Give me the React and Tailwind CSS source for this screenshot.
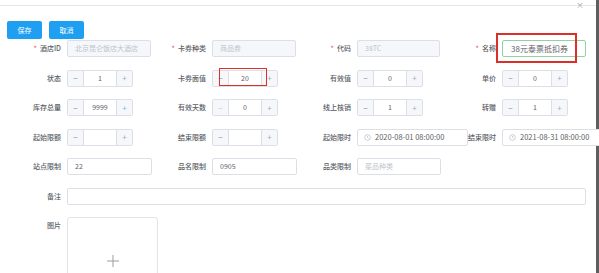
import React from 'react'

const font = { fontFamily: '"Noto Sans CJK SC", "Noto Sans", sans-serif' }

function Field({ label, required, children, className = '' }){
  return (
    <div className={'flex items-center h-[17px] ' + className}>
      <span className="w-[61px] shrink-0 text-right text-[7px] leading-none text-[#5a5e66] font-medium whitespace-nowrap">
        {required && <span className="text-[#f56c6c] mr-[3px]">*</span>}
        {label}
      </span>
      <div className="ml-[6px] h-full flex items-center">{children}</div>
    </div>
  )
}

function TextInput({ value, placeholder, disabled, green, big, w = 'w-[84px]' }){
  const border = green ? 'border-[#8fd4a0]' : 'border-[#dcdfe6]'
  const bg = disabled ? 'bg-[#f5f7fa]' : 'bg-white'
  const size = big ? 'text-[8px] pl-[8px]' : 'text-[7px] pl-[7px]'
  return (
    <div className={`${w} h-[17px] border ${border} ${bg} ${size} rounded-[2px] flex items-center overflow-hidden whitespace-nowrap leading-none`}>
      {value ? (
        <span className={disabled ? 'text-[#c0c4cc]' : 'text-[#606266]'}>{value}</span>
      ) : (
        <span className="text-[#c0c4cc]">{placeholder}</span>
      )}
    </div>
  )
}

function NumberInput({ value, minusOff, plusBlue }){
  return (
    <div className="w-[66px] h-[17px] border border-[#dcdfe6] rounded-[2px] flex text-[7px] leading-none overflow-hidden">
      <div className={`w-[16px] bg-[#f5f7fa] border-r border-[#dcdfe6] flex items-center justify-center text-[8px] ${minusOff ? 'text-[#c8cbd2]' : 'text-[#8a8e96]'}`}>−</div>
      <div className="flex-1 flex items-center justify-center text-[#606266]">{value}</div>
      <div className={`w-[16px] bg-[#f5f7fa] border-l border-[#dcdfe6] flex items-center justify-center text-[8px] ${plusBlue ? 'text-[#7fb9ef]' : 'text-[#a8abb2]'}`}>+</div>
    </div>
  )
}

function DateInput({ value, w = 'w-[111px]' }){
  return (
    <div className={`${w} relative z-10 h-[17px] border border-[#dcdfe6] bg-white rounded-[2px] pl-[6px] flex items-center gap-[4px] text-[7.5px] leading-none text-[#606266] whitespace-nowrap`}>
      <svg width="7" height="7" viewBox="0 0 16 16" fill="none" stroke="#b4b7bd" strokeWidth="1.5">
        <circle cx="8" cy="8" r="6.5" />
        <path d="M8 4.5V8l2.5 1.5" />
      </svg>
      <span>{value}</span>
    </div>
  )
}

export default function App(){
  return (
    <div className="w-[599px] h-[273px] overflow-hidden flex bg-white" style={font}>
      <div className="w-[596px] shrink-0 relative">
        <div className="h-[6px] border-b border-[#e4e7ed]" />
        <span className="absolute right-[12px] top-[1px] text-[8px] leading-none text-[#a0a0a0]">×</span>

        <div className="flex gap-[7px] pl-[7px] pt-[15px]">
          <button className="w-[35px] h-[18px] bg-[#1e9ff2] rounded-[2px] text-white text-[7px] leading-none">保存</button>
          <button className="w-[35px] h-[18px] bg-[#1e9ff2] rounded-[2px] text-white text-[7px] leading-none">取消</button>
        </div>

        <div className="grid grid-cols-[repeat(4,145px)] gap-y-[12.5px] mt-[1px]">
          <Field label="酒店ID" required><TextInput disabled value="北京昆仑饭店大酒店" /></Field>
          <Field label="卡券种类" required><TextInput disabled value="商品券" /></Field>
          <Field label="代码" required><TextInput disabled value="38TC" w="w-[83px]" /></Field>
          <Field label="名称" required><TextInput green big value="38元泰票抵扣券" /></Field>

          <Field label="状态"><NumberInput value="1" /></Field>
          <Field label="卡券面值"><NumberInput value="20" /></Field>
          <Field label="有效值"><NumberInput value="0" /></Field>
          <Field label="单价"><NumberInput value="0" /></Field>

          <Field label="库存总量"><NumberInput value="9999" plusBlue /></Field>
          <Field label="有效天数"><NumberInput value="0" minusOff /></Field>
          <Field label="线上核销"><NumberInput value="1" /></Field>
          <Field label="转赠"><NumberInput value="1" /></Field>

          <Field label="起始限额"><NumberInput value="" /></Field>
          <Field label="结束限额"><NumberInput value="" /></Field>
          <Field label="起始限时"><DateInput value="2020-08-01 08:00:00" /></Field>
          <Field label="结束限时"><DateInput value="2021-08-31 08:00:00" w="w-[110px]" /></Field>

          <Field label="站点限制"><TextInput value="22" w="w-[85px]" /></Field>
          <Field label="品名限制"><TextInput value="0905" w="w-[85px]" /></Field>
          <Field label="品类限制"><TextInput placeholder="菜品种类" /></Field>
          <div />

          <Field label="备注" className="col-span-4"><TextInput value="" w="w-[519px]" /></Field>

          <div className="col-span-4 flex">
            <span className="w-[61px] shrink-0 text-right text-[7px] leading-none text-[#5a5e66] font-medium pt-[5px]">图片</span>
            <div className="ml-[6px] w-[91px] h-[88px] border border-[#e2e4e8] rounded-[3px] flex items-center justify-center">
              <svg width="12" height="12" viewBox="0 0 12 12" stroke="#9a9ca2" strokeWidth="1">
                <path d="M6 0v12M0 6h12" />
              </svg>
            </div>
          </div>
        </div>

        <div className="absolute left-[219px] top-[68px] w-[48px] h-[18px] border-[1.5px] border-[#d9302a]" />
        <div className="absolute left-[496px] top-[33px] w-[81px] h-[30px] border-2 border-[#d9302a]" />
      </div>
      <div className="w-[3px] bg-[#5e5e5e]" />
    </div>
  )
}
